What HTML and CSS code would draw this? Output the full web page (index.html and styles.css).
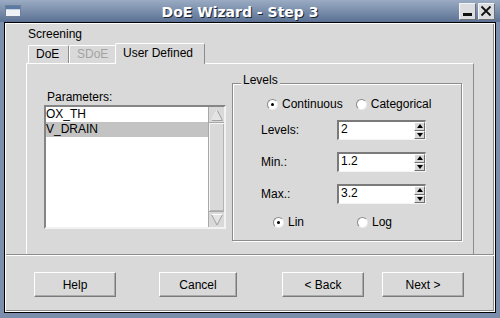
FILE: index.html
```html
<!DOCTYPE html>
<html>
<head>
<meta charset="utf-8">
<title>DoE Wizard - Step 3</title>
<link rel="stylesheet" href="styles.css">
</head>
<body>
<div class="window">
  <div class="titlebar">
    <svg class="app-icon" width="16" height="12" viewBox="0 0 16 12">
      <rect x="0.5" y="0.5" width="15" height="11" fill="#eef1f5" stroke="#6f7f96"/>
      <rect x="1" y="1" width="14" height="3" fill="#5a7aa6"/>
      <rect x="1" y="4" width="14" height="1" fill="#c9d1dc"/>
    </svg>
    <div class="title">DoE Wizard - Step 3</div>
    <div class="wm-btns">
      <span class="wm-btn"><svg width="14" height="14" viewBox="0 0 14 14"><rect x="3" y="9" width="9" height="3" fill="#111"/></svg></span>
      <span class="wm-btn"><svg width="14" height="14" viewBox="0 0 14 14"><path d="M2.5 2.5 L11.5 11.5 M11.5 2.5 L2.5 11.5" stroke="#111" stroke-width="1.8" fill="none"/></svg></span>
    </div>
  </div>
  <div class="frame">
    <div class="content">
      <div class="screening">Screening</div>
      <div class="notebook">
        <div class="tabs">
          <div class="tab tab-doe">DoE</div>
          <div class="tab tab-sdoe disabled">SDoE</div>
          <div class="tab tab-user selected">User Defined</div>
        </div>
        <div class="panel">
          <div class="params">
            <div class="params-label">Parameters:</div>
            <div class="listbox">
              <div class="items">
                <div class="item">OX_TH</div>
                <div class="item sel">V_DRAIN</div>
              </div>
              <div class="scrollbar">
                <div class="sb-arrow">
                  <svg width="14" height="14" viewBox="0 0 14 14"><path d="M7 2 L12.5 12.5 L1.5 12.5 Z" fill="#e4e4e4" stroke="#a0a0a0"/><path d="M7 2 L1.5 12.5" stroke="#fff" fill="none"/></svg>
                </div>
                <div class="sb-thumb"></div>
                <div class="sb-arrow">
                  <svg width="14" height="14" viewBox="0 0 14 14"><path d="M7 12 L12.5 1.5 L1.5 1.5 Z" fill="#e4e4e4" stroke="#a0a0a0"/><path d="M1.5 1.5 L12.5 1.5" stroke="#fff" fill="none"/></svg>
                </div>
              </div>
            </div>
          </div>
          <div class="levels">
            <div class="levels-title">Levels</div>
            <div class="radio-row row-type">
              <span class="radio"><span class="rb on"></span>Continuous</span>
              <span class="radio"><span class="rb"></span>Categorical</span>
            </div>
            <div class="field-row">
              <span class="field-label">Levels:</span>
              <div class="spin"><span class="spin-val">2</span><span class="spin-btns"><span class="spin-btn"><span class="arr-up"></span></span><span class="spin-btn"><span class="arr-down"></span></span></span></div>
            </div>
            <div class="field-row">
              <span class="field-label">Min.:</span>
              <div class="spin"><span class="spin-val">1.2</span><span class="spin-btns"><span class="spin-btn"><span class="arr-up"></span></span><span class="spin-btn"><span class="arr-down"></span></span></span></div>
            </div>
            <div class="field-row">
              <span class="field-label">Max.:</span>
              <div class="spin"><span class="spin-val">3.2</span><span class="spin-btns"><span class="spin-btn"><span class="arr-up"></span></span><span class="spin-btn"><span class="arr-down"></span></span></span></div>
            </div>
            <div class="radio-row row-scale">
              <span class="radio"><span class="rb on"></span>Lin</span>
              <span class="radio"><span class="rb"></span>Log</span>
            </div>
          </div>
        </div>
      </div>
      <div class="separator"></div>
      <div class="buttons">
        <div class="btn btn-help">Help</div>
        <div class="btn btn-cancel">Cancel</div>
        <div class="btn btn-back">&lt; Back</div>
        <div class="btn btn-next">Next &gt;</div>
      </div>
    </div>
  </div>
</div>
</body>
</html>
```

FILE: styles.css
```css
html, body {
  margin: 0;
  padding: 0;
}
body {
  width: 500px;
  height: 318px;
  overflow: hidden;
  background: #7b8fad;
  font-family: "Liberation Sans", Arial, sans-serif;
  font-size: 12px;
  color: #000;
}
.window {
  display: flex;
  flex-direction: column;
  height: 318px;
}
.titlebar {
  height: 22px;
  display: flex;
  align-items: center;
  padding: 0 5px;
  background: linear-gradient(#9aabc3, #5b7193);
}
.app-icon {
  display: block;
  flex: none;
}
.title {
  flex: 1;
  text-align: center;
  font-family: "DejaVu Sans", sans-serif;
  font-weight: bold;
  font-size: 14px;
  line-height: 20px;
  padding-top: 2px;
  color: #fff;
  text-shadow: 1px 1px 0 #1d2636;
  white-space: nowrap;
}
.wm-btns {
  display: flex;
  gap: 2px;
}
.wm-btn {
  box-sizing: border-box;
  width: 17px;
  height: 17px;
  background: #dcdde0;
  border: 1px solid;
  border-color: #f4f4f4 #6b6f78 #6b6f78 #f4f4f4;
  display: flex;
}
.wm-btn svg {
  display: block;
}
.frame {
  flex: 1;
  margin: 0 4px 5px;
  border: 1px solid #000;
  display: flex;
}
.content {
  flex: 1;
  background: #d9d9d9;
  border: 1px solid #fff;
  box-shadow: inset -1px -1px 0 #8c8c8c;
  display: flex;
  flex-direction: column;
}
.screening {
  margin: 3px 0 0 22px;
  line-height: 14px;
}
.notebook {
  margin: 2px 0 0 20px;
  width: 448px;
}
.tabs {
  display: flex;
  align-items: flex-end;
  height: 20px;
  padding-left: 2px;
}
.tab {
  box-sizing: border-box;
  height: 18px;
  border-top: 1px solid #fff;
  border-left: 1px solid #fff;
  border-right: 1px solid #8c8c8c;
  border-radius: 2px 2px 0 0;
  padding: 1px 0 2px 7px;
  line-height: 14px;
  white-space: nowrap;
  background: #d9d9d9;
}
.tab-doe {
  width: 41px;
}
.tab-sdoe {
  width: 47px;
}
.tab.disabled {
  color: #a3a3a3;
}
.tab.selected {
  width: 90px;
  height: 21px;
  padding: 2px 0 4px 7px;
  margin: 0 0 -1px -1px;
  position: relative;
  z-index: 1;
}
.panel {
  box-sizing: border-box;
  height: 191px;
  border-top: 1px solid #fff;
  border-left: 1px solid #fff;
  border-right: 1px solid #8c8c8c;
  display: flex;
  align-items: flex-start;
}
.params {
  margin: 26px 0 0 17px;
}
.params-label {
  line-height: 14px;
  padding-left: 3px;
  margin-bottom: 1px;
}
.listbox {
  box-sizing: border-box;
  width: 182px;
  height: 124px;
  border: 2px solid;
  border-color: #858585 #f2f2f2 #f2f2f2 #858585;
  background: #fff;
  display: flex;
}
.items {
  flex: 1;
}
.item {
  line-height: 15px;
  white-space: nowrap;
}
.item.sel {
  background: #c3c3c3;
}
.scrollbar {
  box-sizing: border-box;
  width: 16px;
  display: flex;
  flex-direction: column;
  background: #d9d9d9;
  border-left: 1px solid #a8a8a8;
}
.sb-arrow {
  height: 15px;
  display: flex;
  align-items: center;
  justify-content: center;
}
.sb-arrow svg {
  display: block;
}
.sb-thumb {
  flex: 1;
  border-top: 1px solid #a8a8a8;
  border-bottom: 1px solid #a8a8a8;
  box-shadow: inset 1px 1px 0 #f4f4f4, inset -1px -1px 0 #b4b4b4;
}
.levels {
  box-sizing: border-box;
  width: 230px;
  height: 158px;
  margin: 19px 0 0 6px;
  border: 1px solid #8c8c8c;
  box-shadow: inset 1px 1px 0 #fff, 1px 1px 0 #fff;
  position: relative;
  display: flex;
  flex-direction: column;
}
.levels-title {
  position: absolute;
  top: -10px;
  left: 8px;
  padding: 0 2px;
  background: #d9d9d9;
  line-height: 12px;
}
.radio-row {
  display: flex;
  align-items: center;
  height: 15px;
}
.row-type {
  margin: 13px 0 0 34px;
  gap: 13px;
}
.row-scale {
  margin: 11px 0 0 40px;
  gap: 53px;
}
.radio {
  display: flex;
  align-items: center;
  gap: 4px;
  line-height: 15px;
}
.rb {
  box-sizing: border-box;
  width: 11px;
  height: 11px;
  border-radius: 50%;
  background: #fff;
  border: 1px solid;
  border-color: #8a8a8a #ececec #ececec #8a8a8a;
  position: relative;
}
.rb.on::after {
  content: "";
  position: absolute;
  left: 3px;
  top: 3px;
  width: 3px;
  height: 3px;
  border-radius: 50%;
  background: #000;
}
.field-row {
  display: flex;
  align-items: center;
  height: 20px;
  margin: 12px 0 0 28px;
}
.row-type + .field-row {
  margin-top: 8px;
}
.field-label {
  width: 76px;
  line-height: 14px;
}
.spin {
  box-sizing: border-box;
  width: 89px;
  height: 20px;
  display: flex;
  background: #fff;
  border-style: solid;
  border-width: 2px 1px 1px 2px;
  border-color: #7a7a7a #f4f4f4 #f4f4f4 #7a7a7a;
}
.spin-val {
  flex: 1;
  padding: 0 0 3px 2px;
  line-height: 14px;
}
.spin-btns {
  width: 11px;
  display: flex;
  flex-direction: column;
}
.spin-btn {
  flex: 1;
  box-sizing: border-box;
  background: #d9d9d9;
  border: 1px solid;
  border-color: #fff #6e6e6e #6e6e6e #fff;
  display: flex;
  align-items: center;
  justify-content: center;
}
.arr-up {
  width: 0;
  height: 0;
  border-left: 3px solid transparent;
  border-right: 3px solid transparent;
  border-bottom: 4px solid #000;
}
.arr-down {
  width: 0;
  height: 0;
  border-left: 3px solid transparent;
  border-right: 3px solid transparent;
  border-top: 4px solid #000;
}
.separator {
  box-sizing: border-box;
  height: 2px;
  border-top: 1px solid #8c8c8c;
  border-bottom: 1px solid #fff;
}
.buttons {
  display: flex;
  margin: 16px 0 0 28px;
}
.btn {
  box-sizing: border-box;
  width: 82px;
  height: 25px;
  border: 1px solid;
  border-color: #fff #7a7a7a #7a7a7a #fff;
  box-shadow: inset -1px -1px 0 #ababab;
  display: flex;
  align-items: center;
  justify-content: center;
  line-height: 14px;
  white-space: nowrap;
}
.btn-cancel {
  width: 78px;
  margin-left: 43px;
}
.btn-back {
  margin-left: 45px;
}
.btn-next {
  margin-left: 18px;
}
```
